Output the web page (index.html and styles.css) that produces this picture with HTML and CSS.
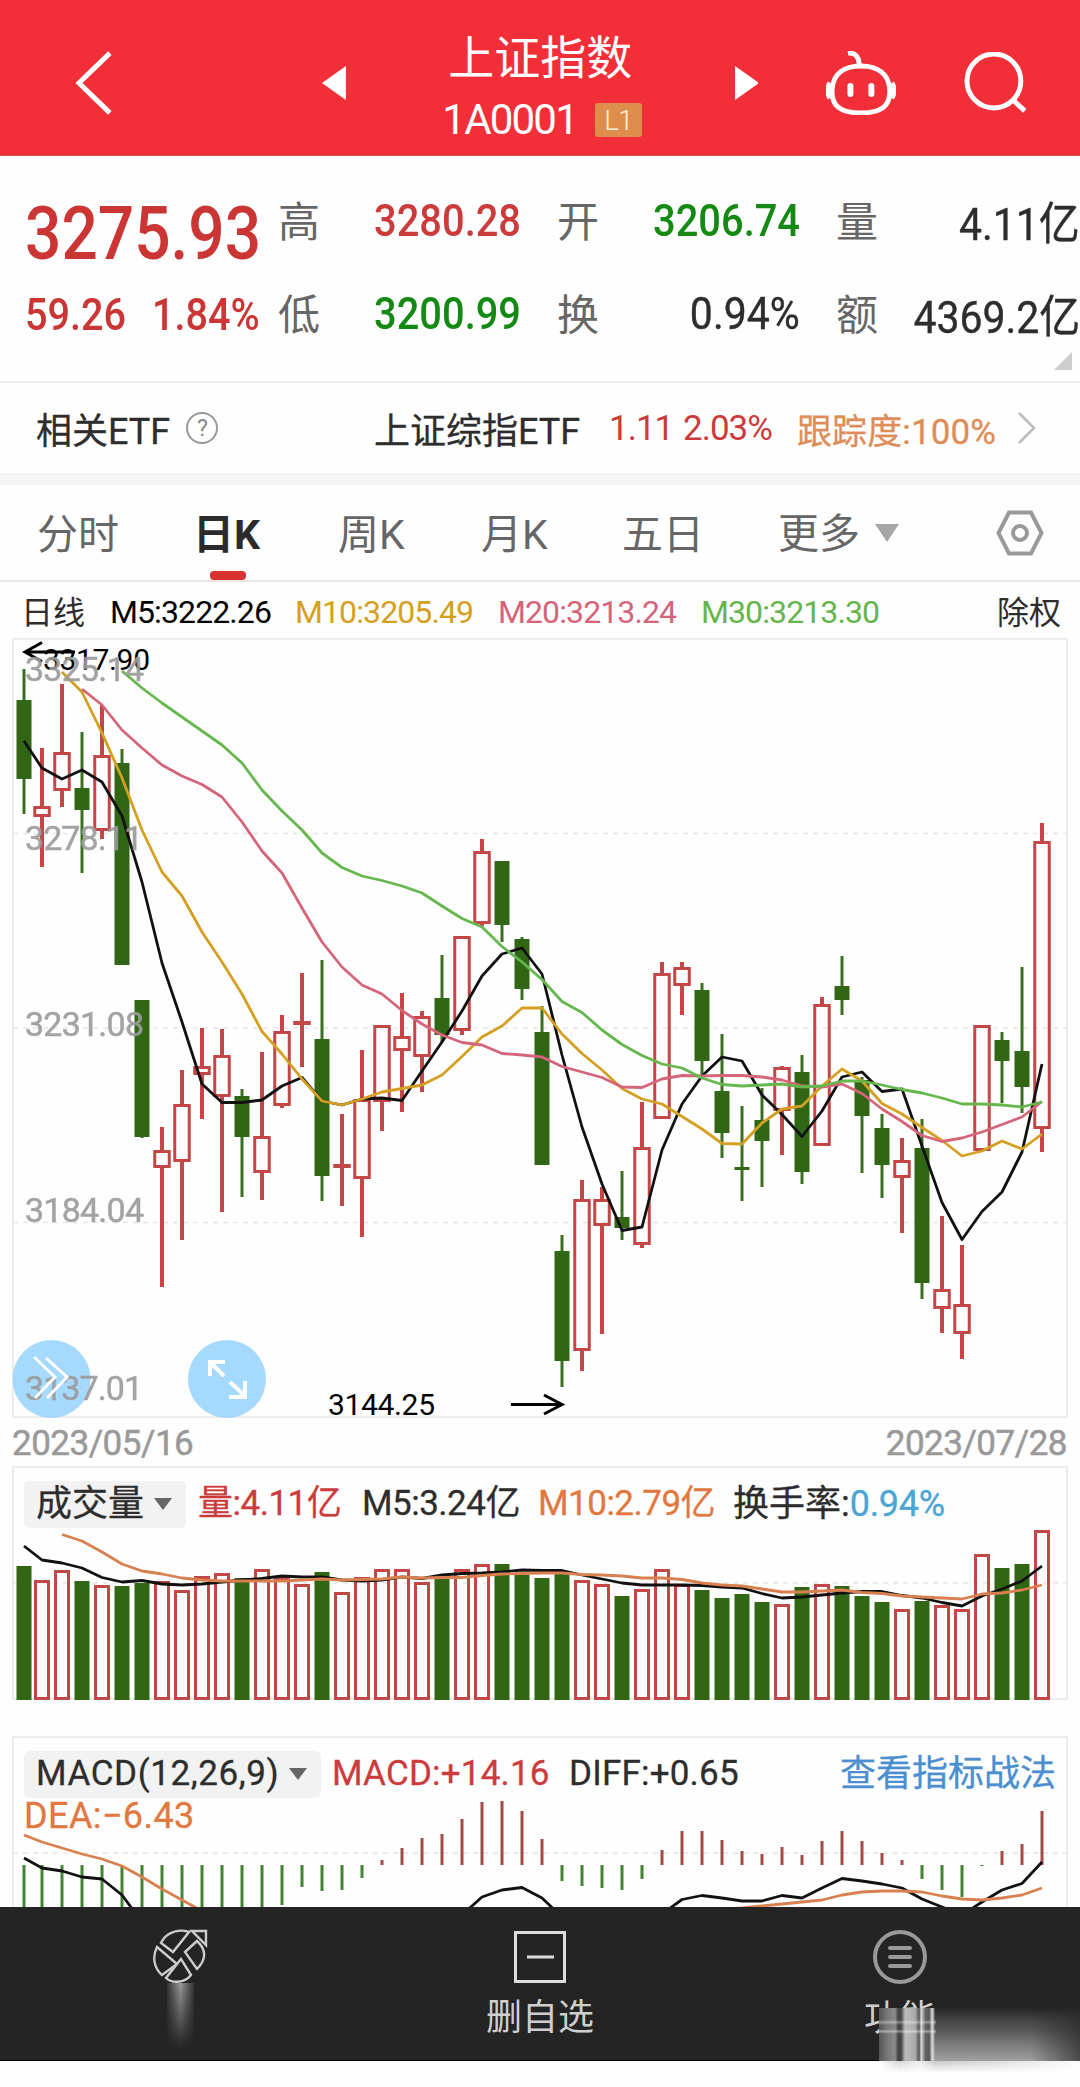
FILE: index.html
```html
<!DOCTYPE html>
<html lang="zh-CN">
<head>
<meta charset="utf-8">
<title>上证指数 1A0001</title>
<link rel="stylesheet" href="styles.css">
</head>
<body>
<header class="topbar">
  <svg class="back" viewBox="0 0 38 64"><path d="M35 2 4 32l31 30"/></svg>
  <svg class="arrow" viewBox="0 0 24 34"><path d="M0 17 24 0v34z"/></svg>
  <div class="title">
    <h1>上证指数</h1>
    <p class="code"><span>1A0001</span><b>L1</b></p>
  </div>
  <svg class="arrow" viewBox="0 0 24 34"><path d="M24 17 0 0v34z"/></svg>
  <svg class="robot" viewBox="0 0 70 64"><path d="M22 2c8-1 12 5 11 13"/><path d="M35 15c-17 0-28 8-29 24-.500 16 8 23 29 23s29.500-7 29-23C63 23 52 15 35 15z"/><path d="M4 32c-3 4-3 11 0 15M66 32c3 4 3 11 0 15"/><path class="eyes" d="M24.500 35v8M45.500 35v8"/></svg>
  <svg class="search" viewBox="0 0 64 62"><circle cx="30" cy="29" r="27"/><path d="m49 48 12 11"/></svg>
</header>

<section class="quote">
  <div class="last"><span class="price">3275.93</span><span class="chg">59.26</span><span class="pct">1.84%</span></div>
  <dl class="stats">
    <dt>高</dt><dd class="up">3280.28</dd><dt>开</dt><dd class="down">3206.74</dd><dt>量</dt><dd>4.11亿</dd>
    <dt>低</dt><dd class="down">3200.99</dd><dt>换</dt><dd>0.94%</dd><dt>额</dt><dd>4369.2亿</dd>
  </dl>
  <i class="corner"></i>
</section>

<section class="etf">
  <span class="name">相关ETF</span><i class="help">?</i><span class="name">上证综指ETF</span><span class="up">1.11</span><span class="up">2.03%</span><span class="track">跟踪度:100%</span>
  <svg class="more" viewBox="0 0 18 32"><path d="m1 1 15 15L1 31"/></svg>
</section>

<nav class="tabs">
  <a>分时</a><a class="on">日K</a><a>周K</a><a>月K</a><a>五日</a><a class="drop">更多<i></i></a>
  <svg class="gear" viewBox="0 0 48 46"><path d="M13 2.500h22L45.500 23 35 43.500H13L2.500 23z"/><circle cx="24" cy="23" r="7"/></svg>
</nav>

<div class="legend">
  <span class="cn">日线</span><span class="c5">M5:3222.26</span><span class="c10">M10:3205.49</span><span class="c20">M20:3213.24</span><span class="c30">M30:3213.30</span><span class="cn">除权</span>
</div>

<svg class="chart" id="kline" viewBox="0 638 1080 780" height="780">
  <rect class="frame" x="13" y="639" width="1054" height="778"/>
  <path class="grid" d="M13 833.500H1067M13 1028H1067M13 1222.500H1067"/>
  <g class="plot"></g>
  <g class="mark">
    <text x="43" y="670" textLength="107">3317.90</text>
    <path d="M75 652H25M42 642.500 25 652l17 9.500"/>
    <text x="328" y="1415" textLength="107">3144.25</text>
    <path d="M511 1404.500h51M544 1395l18 9.500-18 9.500"/>
  </g>
  <g class="tool">
    <circle cx="51.500" cy="1379" r="39"/>
    <circle cx="227" cy="1379" r="39"/><path d="m224 1376-14-14M210 1376v-14h15M230 1382l15 14M245 1381v16h-16"/>
  </g>
  <g class="axis">
    <text x="25" y="681" textLength="119">3325.14</text>
    <text x="25" y="850" textLength="118">3278.11</text>
    <text x="25" y="1036" textLength="119">3231.08</text>
    <text x="25" y="1222" textLength="119">3184.04</text>
    <text x="25" y="1400" textLength="118">3137.01</text>
  </g>
  <g class="tool"><path class="thin" d="m34 1357 21 20-20 21M46 1358l21 19-20 21"/></g>
</svg>
<div class="dates"><span>2023/05/16</span><span>2023/07/28</span></div>

<section class="panel">
  <div class="info vol-info">
    <span class="chip">成交量<i></i></span><span class="up">量:4.11亿</span><span>M5:3.24亿</span><span class="orange">M10:2.79亿</span><span class="rate">换手率:<em>0.94%</em></span>
  </div>
  <svg class="chart" id="volume" viewBox="0 1466 1080 235" height="235">
    <rect class="frame" x="13" y="1467" width="1054" height="232"/>
    <path class="grid" d="M13 1583H1067"/>
    <g class="plot"></g>
  </svg>
</section>

<section class="panel macd">
  <div class="info macd-info">
    <span class="chip">MACD(12,26,9)<i></i></span><span class="up">MACD:+14.16</span><span>DIFF:+0.65</span><a>查看指标战法</a>
    <span class="dea">DEA:−6.43</span>
  </div>
  <svg class="chart" id="macd" viewBox="0 1736 1080 171" height="171">
    <rect class="frame" x="13" y="1737" width="1054" height="232"/>
    <path class="grid" d="M13 1853H1067"/>
    <g class="plot"></g>
  </svg>
</section>

<footer class="dock">
  <div class="item">
    <svg width="58" height="56" viewBox="0 0 58 56"><path d="M18 6a24 24 0 0 1 20-2L22 24 10 15q3-6 8-9zM6 19l20 17-15 11C3 40 1 29 6 19zM46 13 34 24l12 17c9-9 10-19 0-28zM30 31 15 50c5 5 18 6 25-3zM41 3h14v14z"/></svg>
    <i class="fade"></i>
  </div>
  <div class="item"><svg width="52" height="52" viewBox="0 0 52 52"><path d="M1.500 1.500h49v49h-49zM13 26h27"/></svg><span>删自选</span></div>
  <div class="item"><svg class="dim" width="54" height="54" viewBox="0 0 54 54"><circle cx="27" cy="27" r="25"/><path d="M17 18h20M17 27h20M17 36h20"/></svg><span>功能</span></div>
  <i class="smear"></i>
</footer>
<script src="charts.js"></script>
</body>
</html>
```
FILE: styles.css
```css
* { box-sizing: border-box; margin: 0; padding: 0; }
body { width: 1080px; height: 2087px; overflow: hidden; background: #fefefe; color: #2d2d2d; font-family: Roboto, "Noto Sans CJK SC", sans-serif; font-size: 35px; white-space: nowrap; }
i, em { font-style: normal; }
svg { display: block; fill: none; }
.up { color: #cb3b3c; }
.down { color: #148914; }
.orange { color: #e0783f; }

.topbar { height: 156px; background: #f22f39; color: #fff; display: flex; align-items: center; padding: 10px 52px 0 75px; border-bottom: 1px solid #d64850; }
.topbar svg { stroke: #fff; stroke-width: 5; }
.back { width: 38px; height: 64px; }
.topbar .arrow { width: 24px; height: 34px; fill: #fff; stroke: none; margin-left: 209px; }
.title { width: 390px; text-align: center; margin-top: 8px; }
.title h1 { font-size: 46px; line-height: 62px; font-weight: 400; }
.code { display: flex; justify-content: center; align-items: center; gap: 18px; font-size: 42px; line-height: 52px; letter-spacing: -1.800px; margin-top: 5px; padding-left: 4px; }
.code b { width: 47px; height: 34px; border-radius: 3px; background: #dd8e4c; color: #fff0d8; font-size: 28px; line-height: 35px; font-weight: 300; letter-spacing: -1px; }
.title + .arrow { margin-left: 0; }
.robot { width: 70px; height: 64px; margin-left: 68px; }
.robot .eyes { stroke-width: 6; stroke-linecap: round; }
.search { width: 64px; height: 62px; margin-left: 68px; }

.quote { position: relative; height: 227px; border-bottom: 2px solid #ededed; display: flex; padding-top: 38px; }
.last { width: 281px; padding-left: 25px; display: grid; grid-template-columns: 127px 1fr; grid-template-rows: 78px 86px; align-items: center; color: #cb3635; }
.last span { transform-origin: left; }
.price { grid-column: 1 / 3; font-size: 74px; font-weight: 500; transform: scaleX(.865); }
.chg, .pct { font-size: 44px; font-weight: 500; transform: scaleX(.9); }
.stats { display: grid; grid-template-columns: 41px 200px 38px 41px 200px 38px 41px 201px; grid-template-rows: 93px 93px; font-size: 45px; margin-top: -20px; align-items: center; font-weight: 500; }
.stats dt { font-size: 42px; color: #666; font-weight: 400; margin: -5px 0 0 -2px; }
.stats dd { transform: scaleX(.91); transform-origin: right; justify-self: end; font-weight: 400; -webkit-text-stroke: .4px; }
.stats .up, .stats .down { transform: scaleX(.885); font-weight: 500; -webkit-text-stroke: 0; }
.stats dd:nth-of-type(3n+1) { grid-column: 2; }
.stats dt:nth-of-type(3n+2) { grid-column: 4; }
.stats dd:nth-of-type(3n+2) { grid-column: 5; }
.stats dt:nth-of-type(3n) { grid-column: 7; }
.corner { position: absolute; right: 8px; bottom: 11px; border-left: 18px solid transparent; border-bottom: 18px solid #ccc; }

.etf { height: 102px; border-bottom: 12px solid #f4f4f4; display: grid; grid-template-columns: 149px 189px 234px 74px 114px 221px 18px; align-items: center; padding: 0 0 0 37px; font-size: 35px; letter-spacing: -1px; }
.etf .name { font-size: 36px; letter-spacing: 0; margin-left: -1px; -webkit-text-stroke: .3px; }
.help { width: 32px; height: 32px; border: 2px solid #999; border-radius: 50%; font-size: 23px; line-height: 29px; text-align: center; color: #888; }
.etf .track { color: #de8d58; letter-spacing: .100px; -webkit-text-stroke: .3px; }
.more { width: 18px; height: 32px; stroke: #bbb; stroke-width: 2.500; }

.tabs { height: 97px; border-bottom: 2px solid #e8e8e8; display: grid; grid-template-columns: 156px 145px 143px 141px 156px 218px 48px; align-items: center; padding-left: 37px; font-size: 41px; color: #666; }
.tabs a { line-height: 95px; padding-top: 3px; height: 95px; }
.tabs .on { color: #2b2b2b; font-weight: 700; position: relative; }
.tabs .on::after { content: ""; position: absolute; left: 17px; bottom: 0; width: 36px; height: 9px; border-radius: 4px; background: #d93330; }
.drop { display: flex; align-items: center; gap: 15px; }
.drop i { border: 12px solid transparent; border-top: 18px solid #a6a6a6; border-bottom: 0; margin-top: -3px; }
.gear { width: 48px; height: 46px; stroke: #999; stroke-width: 4; }

.legend { height: 56px; display: grid; grid-template-columns: 89px 185px 203px 203px 1fr auto; align-items: center; padding: 4px 19px 0 21px; font-size: 32px; letter-spacing: -.900px; }
.legend .cn { letter-spacing: 0; margin-top: -4px; }
.c5 { color: #000; }
.c10 { color: #d5a021; }
.c20 { color: #d7637a; }
.c30 { color: #64b54b; }

.chart { width: 1080px; }
.frame { stroke: #ebebeb; stroke-width: 2; }
.grid { stroke: #e6e6e6; stroke-width: 1.500; stroke-dasharray: 5 5; }
.axis { font-size: 34px; fill: #9c9c9c; opacity: .92; stroke: #9c9c9c; stroke-width: .5; }
.mark { font-size: 30px; fill: #000; }
.mark path { stroke: #000; stroke-width: 3; fill: none; }
.tool circle { fill: #8fcffd; opacity: .8; }
.tool path { stroke: #fff; stroke-width: 4; }
.tool .thin { stroke-width: 3; }
.r { stroke: #c44747; stroke-width: 3; }
.r.wick { stroke-width: 4; }
.g { fill: #306614; }
.g.wick { stroke: #3b6f22; stroke-width: 3; }
.hist.r { stroke: #a44a4a; }
.hist.g { stroke: #438536; stroke-width: 3; }
.line { fill: none; stroke-width: 2.800; stroke-linejoin: round; }
.black { stroke: #111; }
.gold { stroke: #d5a021; }
.pink { stroke: #d5657b; }
.green { stroke: #66b74d; }
.rust { stroke: #d8804f; }

.dates { height: 48px; padding: 3px 13px 0 12px; display: flex; justify-content: space-between; align-items: center; font-size: 35px; color: #999; -webkit-text-stroke: .5px; letter-spacing: -.500px; }

.panel { display: grid; }
.panel > * { grid-area: 1 / 1; }
.macd { margin-top: 35px; }
.info { display: grid; align-content: start; align-items: center; padding: 13px 0 0 24px; z-index: 1; font-size: 35px; height: 102px; -webkit-text-stroke: .3px; }
.info > span, .info > a { line-height: 50px; }
.vol-info { grid-template-columns: 174px 164px 176px 195px 1fr; letter-spacing: -.500px; }
.vol-info .chip, .vol-info .rate { font-size: 36px; letter-spacing: 0; }
.macd-info { grid-template-columns: 308px 237px 273px 1fr; letter-spacing: .200px; }
.macd-info a { color: #4b8fd0; font-size: 36px; letter-spacing: 0; margin-left: -2px; }
.info .dea { grid-column: 1 / 3; color: #e0783f; margin-top: -3px; line-height: 40px; font-size: 36px; letter-spacing: .400px; }
.chip { justify-self: start; height: 47px; border-radius: 6px; background: #f2f2f2; padding: 0 14px 0 12px; display: flex; align-items: center; gap: 10px; }
.macd-info .chip { letter-spacing: .600px; }
.chip i { border: 9px solid transparent; border-top: 12px solid #666; border-bottom: 0; }
.info em { color: #4aa6d6; letter-spacing: -.300px; }

.dock { position: relative; height: 154px; background: #242424; display: grid; grid-template-columns: repeat(3, 1fr); color: #cfcfcf; font-size: 36px; border-bottom: 1px solid #000; }
.item { display: flex; flex-direction: column; align-items: center; padding-top: 24px; }
.item svg { stroke: #ddd; stroke-width: 3; }
.item:first-child svg { stroke-width: 2.400; stroke: #ccc; margin-top: -3px; }
.item .dim { stroke: #999; stroke-width: 4; stroke-linecap: round; margin-top: -1px; }
.item span { line-height: 48px; margin-top: 11px; }
.fade { width: 27px; height: 66px; background: linear-gradient(90deg, #333, #999 50%, #333); -webkit-mask-image: linear-gradient(#000, transparent); mask-image: linear-gradient(#000, transparent); margin-top: -1px; }
.smear { position: absolute; left: 879px; top: 101px; width: 201px; height: 53px; background:
  linear-gradient(transparent 22%, rgba(255,255,255,.35) 27%, transparent 32%, transparent 40%, rgba(255,255,255,.4) 44%, transparent 49%) 0 0 / 57px 100% no-repeat,
  linear-gradient(90deg, #555 0, #777 4%, #8a8a8a 8%, #444 9.500%, #444 11%, #bbb 13%, #aaa 18%, #555 20%, #ddd 21%, #666 23%, #555 25%, #ddd 26.500%, transparent 28%),
  linear-gradient(90deg, transparent 75%, rgba(40,40,40,.7) 100%),
  linear-gradient(#242424 0, #484848 25%, #555 40%, #707070 60%, #a0a0a0 100%); }
.smear::after { content: ""; position: absolute; left: 0; top: 100%; width: 100%; height: 12px; background: linear-gradient(90deg, transparent, #d4d4d4 10%, #ececec 20%, #c8c8c8 28%, #dcdcdc 60%, transparent); -webkit-mask-image: linear-gradient(#000, transparent); mask-image: linear-gradient(#000, transparent); }
```
FILE: charts.js
```js
const X = i => (i ? 22 + 20 * i : 24);

// direction, high, body top, body bottom, low
const candles = `g669,700,779,814 r748,806,817,867 r684,752,791,807 g732,788,810,873 r705,755,831,839
g749,763,965,965 g1000,1000,1137,1138 r1127,1150,1168,1287 r1070,1104,1162,1240 r1028,1066,1075,1119
r1029,1055,1097,1212 g1089,1096,1137,1197 r1052,1136,1173,1200 r1015,1031,1106,1108 r973,1021,1025,1067
g960,1039,1176,1201 r1114,1164,1167,1206 r1050,1099,1179,1237 r1025,1025,1102,1131 r993,1036,1051,1112
r1011,1016,1057,1092 g955,998,1035,1042 r936,936,1031,1035 r839,851,924,926 g861,861,925,942
g937,939,989,1000 g1006,1032,1165,1165 g1235,1251,1361,1387 r1180,1199,1351,1371 r1187,1199,1226,1334
g1171,1217,1228,1240 r1102,1147,1245,1248 r962,973,1119,1119 r962,967,986,1015 g983,990,1061,1077
g1034,1091,1133,1158 g1106,1167,1170,1201 g1088,1120,1141,1187 r1066,1067,1111,1155 g1055,1072,1172,1184
r997,1004,1146,1146 g956,986,1000,1015 g1077,1080,1116,1173 g1114,1128,1165,1198 r1138,1160,1178,1233
g1119,1148,1283,1299 r1216,1289,1309,1333 r1245,1304,1334,1359 r1025,1025,1151,1151 g1032,1040,1061,1103
g967,1051,1087,1113 r823,841,1129,1152`.split(/\s+/).map(s => [s[0], ...s.slice(1).split(',').map(Number)]);

const volumes = [1566,1580,1570,1581,1585,1586,1583,1581,1590,1576,1573,1578,1569,1577,1584,1572,1592,1577,
  1569,1569,1582,1575,1569,1564,1564,1575,1578,1574,1580,1584,1596,1589,1569,1584,1590,1598,1594,1602,1604,
  1587,1584,1586,1596,1602,1609,1601,1605,1609,1554,1568,1564,1530];

const hist = [1920,1920,1920,1920,1920,1920,1920,1920,1920,1920,1920,1920,1920,1905,1887,1891,1890,1878,
  1860,1848,1838,1834,1819,1802,1801,1811,1839,1881,1886,1888,1890,1879,1850,1831,1831,1840,1851,1854,1847,
  1855,1841,1831,1841,1853,1860,1879,1890,1897,1866,1851,1844,1811];

const body = (dir, x, top, bottom, w) => dir === 'g'
  ? `<rect class="g" x="${x - 7.5}" y="${top}" width="15" height="${bottom - top}"/>`
  : bottom - top < 6
    ? `<rect x="${x - w / 2}" y="${top}" width="${w}" height="4" fill="#c44747"/>`
    : `<rect class="r" x="${x - w / 2 + 1.5}" y="${top + 1.5}" width="${w - 3}" height="${bottom - top - 3}"/>`;

// values run from candle `start`, one per candle
const line = (cls, start, ys) =>
  `<polyline class="line ${cls}" points="${ys.map((y, k) => X(start + k) + ',' + y).join(' ')}"/>`;

document.querySelector('#kline .plot').innerHTML = candles.map(([d, h, t, b, l], i) => {
  const x = X(i);
  return `<path class="${d} wick" d="M${x} ${h}V${t}M${x} ${b}V${l}"/>` + body(d, x, t, b, 17.5);
}).join('') +
line('black', 0, [741,768,779,770,782,816,882,963,1022,1084,1102.5,1102.5,1100,1086,1077.5,1101,1105,1099,1098,
  1100.5,1071,1042,1011,976,954,948,974,1055,1127,1184,1230.5,1227,1150,1104,1076,1057,1061,1095,1114.5,1136.5,
  1111,1077,1072,1091.5,1089,1146,1202.5,1239.5,1211.5,1192,1152,1064]) +
line('gold', 2, [672,692,733,778,830,872,896,932,962,994,1031.5,1054,1079,1101,1105,1099,1092,1088.5,1085,1075,
  1056.5,1037,1026,1008,1008,1034,1053.5,1070,1088.5,1099,1104,1116.5,1129,1143.5,1144,1123,1109,1106,1086,1069,
  1081,1103.5,1114,1127.5,1140.5,1156,1151,1141,1149,1134]) +
line('pink', 3, [689,705,730,748,765,776,784.5,797,822,851,873,908,942,967,985,994,1010.5,1024,1035,1042.5,1045,
  1053.5,1055,1057,1066.5,1072,1077.5,1087,1087.5,1079,1075.5,1076,1075.5,1075.5,1077,1080,1086,1087,1084,1093.5,
  1109,1121.5,1135.5,1141.5,1138,1132,1124.5,1117,1101.5]) +
line('green', 5, [671,688,703,717,731,745,763,790,811,830,853,867.5,876,880.5,886,893,906,918.5,927,946.5,962,979.5,
  1001.5,1012.5,1030,1044.5,1055.5,1064,1068,1078,1084.5,1086,1085,1084,1087,1086,1081,1081,1085,1089.5,1093,1098,
  1104,1104,1105,1107,1102]);

document.querySelector('#volume .plot').innerHTML =
  volumes.map((y, i) => body(candles[i][0], X(i), y, 1700, 16)).join('') +
line('black', 0, [1546,1560,1563,1568,1577.5,1582,1580.5,1584,1585,1584,1582,1580,1578.5,1576,1577,1577,1580,1581,
  1580,1577,1578.5,1575,1573.5,1573,1572,1570,1570.5,1570.5,1575,1579,1583,1585,1585,1585,1585.5,1587,1588,1593.5,
  1598,1597,1595,1593,1591.5,1591.5,1595.5,1598,1602.5,1606,1596,1589,1581,1566]) +
line('rust', 2, [1534.5,1541,1552,1564,1571,1574,1578,1580,1581,1581,1581,1581,1580,1579,1580,1579.5,1579,1577,1578,
  1577.5,1577.5,1575.5,1574,1573.5,1573,1573,1574.5,1575,1576,1578,1578,1579.5,1583,1585,1586,1589,1592,1592,1591,
  1590,1592.5,1593.5,1596,1597,1598,1599,1594,1593,1590,1585]);

document.querySelector('#macd .plot').innerHTML =
  hist.map((y, i) => `<path class="hist ${y < 1865 ? 'r' : 'g'}" d="M${X(i)} 1865V${y}"/>`).join('') +
line('black', 0, [1858,1868,1871,1877,1879,1895,1922]) +
line('black', 22, [1915,1897,1890,1887.5,1898,1917]) +
line('black', 32, [1914,1899.5,1895.5,1898,1901,1901,1895.5,1898,1888,1878.5,1881,1884,1888,1899,1907,1915,1902,1890,
  1883.5,1862]) +
line('rust', 0, [1835,1842,1848,1854,1859,1866,1877,1889,1900,1911]) +
line('rust', 35, [1909,1908,1906,1904,1902,1900,1895,1892,1891,1891,1892,1896,1899,1900,1898,1895,1888]);
```
